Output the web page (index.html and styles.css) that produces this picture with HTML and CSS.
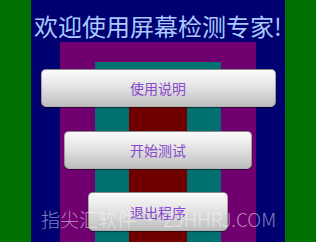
FILE: index.html
```html
<!DOCTYPE html>
<html>
<head>
<meta charset="utf-8">
<link rel="stylesheet" href="styles.css">
</head>
<body>
<div class="screen">
  <div class="bars">
    <div class="bar green">
      <div class="bar navy">
        <div class="bar purple">
          <div class="bar teal">
            <div class="bar maroon"></div>
          </div>
        </div>
      </div>
    </div>
  </div>
  <div class="menu">
    <h1 class="title">欢迎使用屏幕检测专家!</h1>
    <button class="btn btn-help">使用说明</button>
    <button class="btn btn-start">开始测试</button>
    <button class="btn btn-exit">退出程序</button>
  </div>
  <div class="watermark">指尖汇软件 • ZJHHRJ.COM</div>
</div>
</body>
</html>
```
FILE: styles.css
```css
html, body {
  margin: 0;
  padding: 0;
  width: 316px;
  height: 242px;
  overflow: hidden;
  background: #007000;
}
.screen {
  position: relative;
  display: grid;
  width: 316px;
  height: 242px;
  font-family: "Noto Sans CJK SC", "Noto Sans", sans-serif;
}
.bars, .menu {
  grid-area: 1 / 1;
}
.bars {
  display: flex;
  height: 242px;
}
.bar {
  display: flex;
  flex: 1;
  box-sizing: border-box;
}
.green {
  background: #007000;
  padding: 0 31px;
}
.navy {
  background: #000070;
  padding: 42px 29px 0;
}
.purple {
  background: #700070;
  padding: 20px 35px 0;
}
.teal {
  background: #007070;
  padding: 20px 34px 0;
}
.maroon {
  background: #700000;
}
.menu {
  display: flex;
  flex-direction: column;
  align-items: center;
}
.title {
  margin: 14px 0 0;
  font-size: 24px;
  line-height: 24px;
  font-weight: normal;
  color: #a9c9ff;
  white-space: nowrap;
}
.btn {
  height: 38px;
  border: 1px solid rgba(40, 40, 40, 0.35);
  border-radius: 5px;
  background: linear-gradient(#fbfbfb 0%, #e4e4e4 45%, #bebebe 100%);
  box-shadow: 0 1px 1px rgba(0, 0, 0, 0.5);
  font-family: "Noto Sans CJK SC", sans-serif;
  font-size: 14px;
  color: #8a48cc;
  padding: 0;
}
.btn-help {
  margin-top: 31px;
  width: 235px;
}
.btn-start {
  margin-top: 24px;
  width: 188px;
}
.btn-exit {
  margin-top: 23px;
  width: 140px;
  height: 39px;
}
.watermark {
  position: absolute;
  left: 41px;
  top: 205px;
  font-size: 19px;
  line-height: 28px;
  font-weight: 300;
  color: rgba(255, 255, 255, 0.5);
  white-space: nowrap;
}
```
